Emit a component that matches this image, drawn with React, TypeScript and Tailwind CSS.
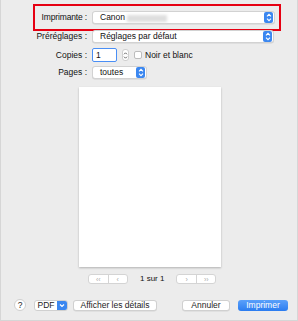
import React from "react"

function Stepper({ className = "" }: { className?: string }) {
  return (
    <span className={`flex items-center justify-center bg-[#3b87f0] rounded-[2px] ${className}`}>
      <svg width="6" height="9" viewBox="0 0 6 9" fill="none" stroke="white" strokeWidth="1.1">
        <path d="M1 3.3 L3 1.3 L5 3.3" />
        <path d="M1 5.7 L3 7.7 L5 5.7" />
      </svg>
    </span>
  )
}

function Select({ value, className = "", children }: { value: string; className?: string; children?: React.ReactNode }) {
  return (
    <div className={`flex items-center h-[13px] bg-white border border-[#d2d2d2] rounded-[3px] pl-[7px] pr-[1px] shadow-[0_0.5px_0.5px_rgba(0,0,0,0.12)] ${className}`}>
      <span className="flex-1 text-[8.5px] text-[#111] leading-none">{value}{children}</span>
      <Stepper className="w-[9px] h-[11px]" />
    </div>
  )
}

function Btn({ children, className = "" }: { children: React.ReactNode; className?: string }) {
  return (
    <div className={`flex items-center justify-center h-[11px] bg-white border border-[#d0d0d0] rounded-[3px] text-[8.5px] text-[#222] leading-none shadow-[0_0.5px_0.5px_rgba(0,0,0,0.1)] ${className}`}>
      {children}
    </div>
  )
}

export default function App() {
  return (
    <div
      className="w-[298px] h-[321px] bg-[#ececec] border-r border-b border-l border-[#d6d6d6] flex flex-col text-[#111]"
      style={{ fontFamily: '"Liberation Sans", Arial, sans-serif' }}
    >
      {/* printer row, highlighted */}
      <div className="mt-[4px] ml-[32px] w-[248px] h-[27px] border-2 border-[#e60012] flex items-center">
        <span className="w-[52px] text-right text-[8.5px] tracking-[-0.15px] leading-none">Imprimante :</span>
        <Select value="Canon" className="ml-[5px] w-[183px]">
          <span className="inline-block ml-[2px] w-[40px] h-[7px] align-middle bg-[#dedede] blur-[1.5px]" />
        </Select>
      </div>

      <div className="flex items-center h-[11px]">
        <span className="w-[86px] text-right text-[8.5px] leading-none">Préréglages :</span>
        <Select value="Réglages par défaut" className="ml-[5px] w-[182px] h-[11px]" />
      </div>

      <div className="flex items-center mt-[6px] h-[14px]">
        <span className="w-[86px] text-right text-[8.5px] leading-none">Copies :</span>
        <div className="ml-[5px] w-[25px] h-[14px] bg-white border-[1.5px] border-[#4a8ff5] rounded-[2px] flex items-center pl-[3px] text-[8.5px] leading-none">1</div>
        <div className="ml-[5px] w-[7px] h-[12px] bg-white border border-[#cfcfcf] rounded-[3px] flex items-center justify-center">
          <svg width="5" height="9" viewBox="0 0 5 9" fill="none" stroke="#555" strokeWidth="0.9">
            <path d="M1 3.3 L2.5 1.8 L4 3.3" />
            <path d="M1 5.7 L2.5 7.2 L4 5.7" />
          </svg>
        </div>
        <div className="ml-[5px] w-[8px] h-[8px] bg-white border border-[#bdbdbd] rounded-[2px]" />
        <span className="ml-[3px] text-[8.5px] leading-none">Noir et blanc</span>
      </div>

      <div className="flex items-center mt-[4px] h-[13px]">
        <span className="w-[86px] text-right text-[8.5px] leading-none">Pages :</span>
        <Select value="toutes" className="ml-[5px] w-[55px]" />
      </div>

      {/* preview */}
      <div className="mt-[8px] ml-[78px] w-[142px] h-[180px] bg-white shadow-[0_0.5px_2px_rgba(0,0,0,0.25)]" />

      {/* pagination */}
      <div className="flex items-center mt-[7px] h-[10px]">
        <div className="ml-[87px] w-[40px] h-[10px] flex bg-white border border-[#d4d4d4] rounded-[3px] text-[7px] text-[#aaa] leading-none">
          <span className="flex-1 flex items-center justify-center border-r border-[#d4d4d4]">‹‹</span>
          <span className="flex-1 flex items-center justify-center">‹</span>
        </div>
        <span className="ml-[12px] text-[8px] leading-none text-[#111]">1 sur 1</span>
        <div className="ml-[12px] w-[40px] h-[10px] flex bg-white border border-[#d4d4d4] rounded-[3px] text-[7px] text-[#aaa] leading-none">
          <span className="flex-1 flex items-center justify-center border-r border-[#d4d4d4]">›</span>
          <span className="flex-1 flex items-center justify-center">››</span>
        </div>
      </div>

      {/* bottom buttons */}
      <div className="flex items-center mt-[15px] h-[12px]">
        <div className="ml-[13px] w-[12px] h-[12px] rounded-full bg-white border border-[#cfcfcf] flex items-center justify-center text-[8.5px] leading-none text-[#222]">?</div>
        <div className="ml-[8px] w-[34px] h-[11px] flex bg-white border border-[#d0d0d0] rounded-[3px] overflow-hidden text-[8.5px] leading-none text-[#222]">
          <span className="flex-1 flex items-center justify-center">PDF</span>
          <span className="w-[10px] bg-[#3b87f0] flex items-center justify-center">
            <svg width="6" height="5" viewBox="0 0 6 5" fill="none" stroke="white" strokeWidth="1.1">
              <path d="M1 1.5 L3 3.5 L5 1.5" />
            </svg>
          </span>
        </div>
        <Btn className="ml-[5px] w-[84px]">Afficher les détails</Btn>
        <Btn className="ml-[25px] w-[48px]">Annuler</Btn>
        <div className="ml-[8px] w-[50px] h-[11px] flex items-center justify-center rounded-[3px] bg-gradient-to-b from-[#5aa0fa] to-[#2a7cf0] text-white text-[8.5px] leading-none">Imprimer</div>
      </div>
    </div>
  )
}
